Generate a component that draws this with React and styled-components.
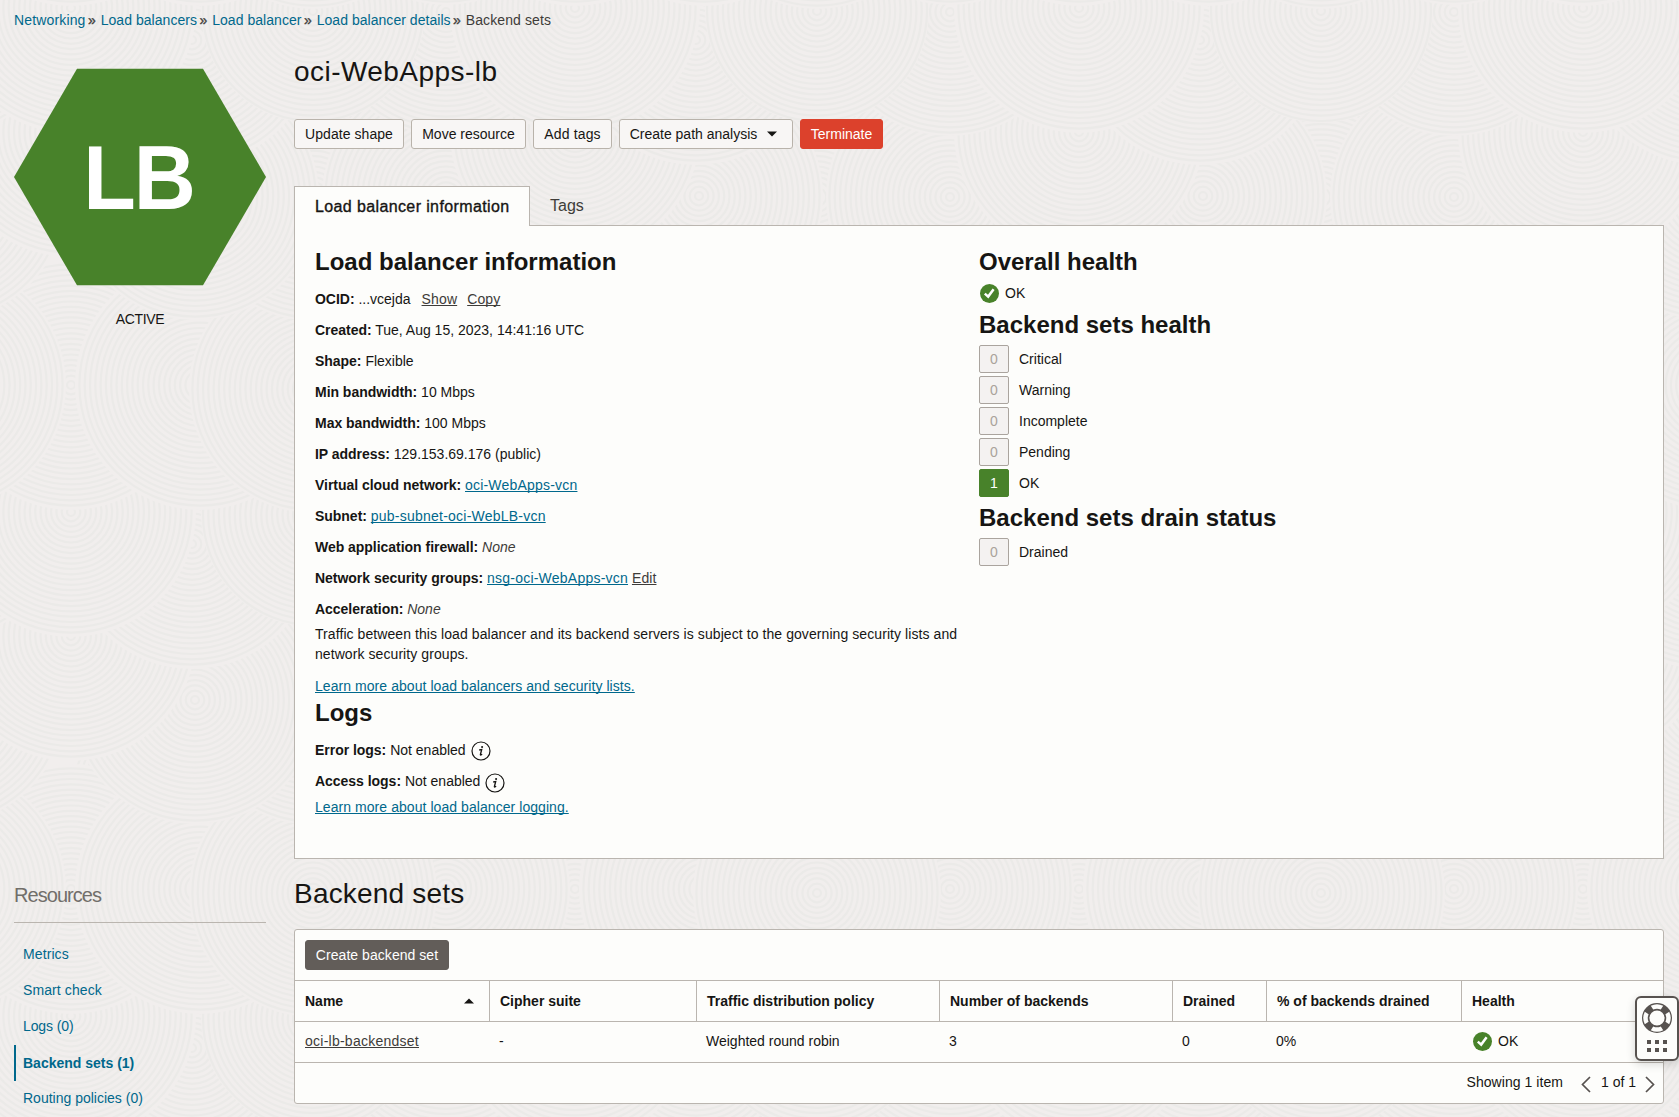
import React from "react";
import styled, { createGlobalStyle, css } from "styled-components";

const C = {
  bg: "#f1eeed",
  ring: "#ebeae8",
  panel: "#fdfdfb",
  line: "#bab5af",
  text: "#161513",
  soft: "#3e3c39",
  link: "#00688c",
  green: "#48822a",
  red: "#dc412c",
  dark: "#625d59",
};

const Global = createGlobalStyle`
  * { box-sizing: border-box; }
  html, body { margin: 0; padding: 0; height: 1117px; overflow: hidden; background: ${C.bg}; }
  body { font: 14px/20px "Liberation Sans", Arial, sans-serif; color: ${C.text}; }
  h1, h2, p { margin: 0; }
`;

const Page = styled.div`
  position: relative;
  width: 1679px;
  height: 1117px;
  overflow: hidden;
  isolation: isolate;
`;

const Texture = styled.svg`
  position: absolute;
  inset: 0;
  z-index: -1;
`;

const Breadcrumbs = styled.nav`
  display: flex;
  padding: 10px 14px 0;
  height: 30px;
  white-space: nowrap;
`;
const Crumb = styled.span`
  color: ${(p) => (p.$current ? C.soft : C.link)};
  letter-spacing: ${(p) => p.$track || 0}px;
`;
const Chevrons = styled.span`
  width: 15.2px;
  padding-left: 2.5px;
  font-size: 14px;
  -webkit-text-stroke: 0.3px ${C.soft};
  color: ${C.soft};
`;

const Layout = styled.div`
  display: grid;
  grid-template-columns: 252px 1370px;
  grid-template-rows: 829px 258px;
  column-gap: 28px;
  padding-left: 14px;
`;

const Identity = styled.aside`
  padding-top: 38px;
  text-align: center;
`;
const Hexagon = styled.div`
  display: flex;
  align-items: center;
  justify-content: center;
  height: 218px;
  padding: 2px 2px 0 0;
  background: ${C.green};
  clip-path: polygon(25% 0.3%, 75% 0.3%, 100% 50%, 75% 99.7%, 25% 99.7%, 0 50%);
`;
const Initials = styled.span`
  color: #fff;
  font-size: 91px;
  font-weight: bold;
  line-height: 100px;
  letter-spacing: -2px;
  transform: scaleX(0.945);
`;
const Status = styled.div`
  margin-top: 23px;
  letter-spacing: -0.35px;
`;

const Title = styled.h1`
  padding-top: 1px;
  font-size: 28px;
  line-height: 36px;
  height: 36px;
  font-weight: normal;
  letter-spacing: ${(p) => p.$track || 0}px;
`;
const Info = styled.main`
  padding-top: 23px;
`;
const Actions = styled.div`
  display: flex;
  gap: 7px;
  margin-top: 30px;
`;
const Button = styled.button`
  display: inline-flex;
  align-items: center;
  justify-content: center;
  gap: 10px;
  width: ${(p) => p.$w}px;
  height: 30px;
  padding: 0 ${(p) => p.$right || 0}px 0 0;
  border: 1px solid #b9b3ab;
  border-radius: 3px;
  background: #f8f6f5;
  color: ${C.text};
  font: inherit;
  letter-spacing: ${(p) => p.$track || 0}px;
  white-space: nowrap;
  ${(p) =>
    p.$tone &&
    css`
      background: ${p.$tone};
      border-color: ${p.$tone};
      color: #fff;
    `}
`;

const Tabs = styled.div`
  display: flex;
  height: 39px;
  margin-top: 37px;
`;
const Tab = styled.div`
  height: 40px;
  padding: 10px 20px 0 20px;
  font-size: 16px;
  line-height: 20px;
  color: ${C.soft};
  ${(p) =>
    p.$active &&
    css`
      position: relative;
      width: 236px;
      padding-top: 10px;
      padding-right: 0;
      border: 1px solid ${C.line};
      border-bottom: 0;
      background: ${C.panel};
      color: ${C.text};
      -webkit-text-stroke: 0.35px ${C.text};
      letter-spacing: 0.38px;
      white-space: nowrap;
    `}
`;
const Panel = styled.section`
  display: grid;
  grid-template-columns: 664px 664px;
  height: 634px;
  padding: 22px 20px;
  border: 1px solid ${C.line};
  background: ${C.panel};
`;
const Heading = styled.h2`
  font-size: 24px;
  line-height: 28px;
  font-weight: bold;
  margin-top: ${(p) => p.$top || 0}px;
`;
const Facts = styled.div`
  display: flex;
  flex-direction: column;
  gap: 11px;
  margin-top: 13px;
`;
const Fact = styled.div`
  height: 20px;
  white-space: pre;
  svg {
    position: relative;
    top: ${(p) => p.$drop || 0}px;
    margin-left: 5px;
    vertical-align: -5px;
  }
`;
const Label = styled.b`
  letter-spacing: -0.03px;
`;
const Link = styled.a`
  color: ${(p) => (p.$muted ? C.soft : C.link)};
  text-decoration: underline;
  text-underline-offset: 1px;
  text-decoration-thickness: 1px;
  text-decoration-skip-ink: none;
  margin-left: ${(p) => p.$left || 0}px;
  letter-spacing: ${(p) => p.$track || 0}px;
`;
const None = styled.i`
  color: ${C.soft};
`;
const Note = styled.p`
  width: 650px;
  margin-top: ${(p) => p.$top}px;
  letter-spacing: 0.075px;
`;

const HealthLine = styled.div`
  display: flex;
  align-items: center;
  gap: 6px;
  padding-left: ${(p) => p.$left || 0}px;
  margin-top: ${(p) => p.$top || 0}px;
  height: 20px;
`;
const Counts = styled.div`
  display: flex;
  flex-direction: column;
  gap: 3px;
  margin-top: 6px;
`;
const CountRow = styled.div`
  display: flex;
  align-items: center;
  gap: 10px;
  height: 28px;
`;
const Count = styled.span`
  width: 30px;
  height: 28px;
  border: 1px solid ${(p) => (p.$on ? C.green : "#aaa49e")};
  border-radius: 2px;
  background: ${(p) => (p.$on ? C.green : "#f4f2f1")};
  color: ${(p) => (p.$on ? "#fff" : "#aaa39b")};
  line-height: 26px;
  text-align: center;
`;

const Resources = styled.aside`
  padding-top: 24px;
`;
const ResourcesTitle = styled.div`
  height: 40px;
  border-bottom: 1px solid ${C.line};
  font-size: 20px;
  line-height: 24px;
  color: #716e6a;
  letter-spacing: -0.95px;
`;
const Nav = styled.nav`
  margin-top: 14px;
`;
const NavItem = styled.a`
  display: block;
  height: 36px;
  padding-left: 9px;
  line-height: 35px;
  color: ${C.link};
  letter-spacing: ${(p) => p.$track || 0}px;
  ${(p) =>
    p.$active &&
    css`
      border-left: 2px solid ${C.link};
      padding-left: 7px;
      line-height: 36px;
      font-weight: bold;
    `}
`;

const Backends = styled.section`
  padding-top: 16px;
`;
const Card = styled.div`
  height: 175px;
  margin-top: 18px;
  border: 1px solid ${C.line};
  border-radius: 3px;
  background: ${C.panel};
`;
const Toolbar = styled.div`
  height: 50px;
  padding: 10px;
`;
const TableRow = styled.div`
  display: grid;
  grid-template-columns: 194px 207px 243px 233px 94px 195px 202px;
  height: 41px;
  border-top: 1px solid ${C.line};
`;
const HeadCell = styled.div`
  display: flex;
  align-items: center;
  justify-content: space-between;
  padding: 0 15px 0 10px;
  font-weight: bold;
  white-space: nowrap;
  & + & {
    border-left: 1px solid ${C.line};
  }
`;
const Cell = styled.div`
  display: flex;
  align-items: center;
  padding: 0 0 2px 10px;
  white-space: nowrap;
`;
const Footer = styled.div`
  display: flex;
  align-items: center;
  justify-content: flex-end;
  height: 41px;
  padding: 0 8px 2px 0;
  border-top: 1px solid ${C.line};
  svg {
    position: relative;
    top: 2px;
  }
`;
const Showing = styled.span`
  margin-right: 18px;
  letter-spacing: 0.05px;
`;
const PagerText = styled.span`
  margin: 0 9px 0 10px;
`;

const HelpWidget = styled.div`
  position: absolute;
  right: 0;
  top: 996px;
  display: flex;
  flex-direction: column;
  align-items: center;
  width: 44px;
  height: 65px;
  padding-top: 4px;
  border: 2px solid #57524f;
  border-radius: 6px;
  background: ${C.panel};
  box-shadow: 0 3px 10px rgba(0, 0, 0, 0.16);
`;
const Dots = styled.div`
  display: grid;
  grid-template-columns: repeat(3, 4px);
  gap: 4px;
  margin-top: 6px;
  i {
    height: 4px;
    background: #57524f;
  }
`;

/* Raked-sand texture: overlapping discs of rings on a 504px tile,
   painted from the bottom of the page up so upper discs cover lower ones. */
const DISCS = [
  [195, 196, 124],
  [313, 197, 124],
  [446, 197, 124],
  [313, 389, 124],
  [446, 385, 124],
  [71, 385, 125],
  [200, 385, 125],
  [71, 132, 125],
  [446, 12, 124],
  [71, 8, 125],
  [313, 11, 112],
  [192, 40, 125],
  [192, 300, 125],
  [380, 100, 125],
];
function Background() {
  const rows = [2, 1, 0, -1];
  const cols = [-1, 0, 1, 2, 3];
  const bands = [[12, 5, 6, 4, 3], [13, 1, 0, 2, 7], [11, 8, 9, 10]];
  const placed = [];
  rows.forEach((row) =>
    bands.forEach((band) =>
      band.forEach((k) =>
        cols.forEach((col) => {
          const [x, y, r] = DISCS[k];
          placed.push({ x: x + col * 504, y: y + row * 504, r });
        })
      )
    )
  );
  const rings = [];
  for (let r = 4; r < 125; r += 5.3) rings.push(r);
  return (
    <Texture width="1679" height="1117">
      <defs>
        {[112, 124, 125].map((size) => (
          <g key={size} id={`disc${size}`}>
            <circle r={size} fill={C.bg} />
            {rings
              .filter((r) => r <= size)
              .map((r) => (
                <circle key={r} r={r} fill="none" stroke={C.ring} strokeWidth="2.2" />
              ))}
          </g>
        ))}
      </defs>
      {placed.map((d, i) => (
        <use key={i} href={`#disc${d.r}`} x={d.x} y={d.y} />
      ))}
    </Texture>
  );
}

const Check = () => (
  <svg width="19" height="19" viewBox="0 0 19 19">
    <circle cx="9.5" cy="9.5" r="9.5" fill={C.green} />
    <path d="M4.8 9.6l3.4 3 5.4-7.4" fill="none" stroke="#fff" strokeWidth="2.5" />
  </svg>
);
const InfoIcon = () => (
  <svg width="20" height="20" viewBox="0 0 20 20">
    <circle cx="10" cy="10" r="9" fill="none" stroke={C.text} strokeWidth="1.2" />
    <circle cx="11.1" cy="6" r="1.05" fill={C.text} />
    <path
      d="M8.2 9l2.5-.5-1.3 5c-.2.9.6.8 1.7-.4"
      fill="none"
      stroke={C.text}
      strokeWidth="1.3"
    />
  </svg>
);
const Triangle = ({ up }) => (
  <svg width="10" height="6" viewBox="0 0 10 6">
    <path d={up ? "M0 5.5L5 0.5l5 5z" : "M0 0.5h10L5 5.5z"} fill={C.text} />
  </svg>
);
const Arrow = ({ left }) => (
  <svg width="10" height="17" viewBox="0 0 10 17">
    <path
      d={left ? "M9 1L1.5 8.5 9 16" : "M1 1l7.5 7.5L1 16"}
      fill="none"
      stroke="#57524f"
      strokeWidth="1.7"
    />
  </svg>
);
const Lifebuoy = () => (
  <svg width="32" height="32" viewBox="-16 -16 32 32">
    <circle r="11.3" fill="none" stroke="#57524f" strokeWidth="7.4" />
    {[0, 90, 180, 270].map((a) => (
      <path
        key={a}
        transform={`rotate(${a})`}
        d="M-6.2 -12.2A13.7 13.7 0 0 1 6.2 -12.2L3.8 -8.4A9.2 9.2 0 0 0 -3.8 -8.4z"
        fill={C.panel}
      />
    ))}
  </svg>
);

const COUNTS = [
  ["0", "Critical"],
  ["0", "Warning"],
  ["0", "Incomplete"],
  ["0", "Pending"],
  ["1", "OK"],
];
const HEADERS = [
  "Name",
  "Cipher suite",
  "Traffic distribution policy",
  "Number of backends",
  "Drained",
  "% of backends drained",
  "Health",
];

export default function App() {
  return (
    <Page>
      <Global />
      <Background />
      <Breadcrumbs>
        <Crumb $track={0.15}>Networking</Crumb>
        <Chevrons>»</Chevrons>
        <Crumb $track={0.04}>Load balancers</Crumb>
        <Chevrons>»</Chevrons>
        <Crumb $track={0.04}>Load balancer</Crumb>
        <Chevrons>»</Chevrons>
        <Crumb $track={0.04}>Load balancer details</Crumb>
        <Chevrons>»</Chevrons>
        <Crumb $current $track={0.1}>Backend sets</Crumb>
      </Breadcrumbs>
      <Layout>
        <Identity>
          <Hexagon>
            <Initials>LB</Initials>
          </Hexagon>
          <Status>ACTIVE</Status>
        </Identity>
        <Info>
          <Title $track={0.45}>oci-WebApps-lb</Title>
          <Actions>
            <Button $w={110} $track={0.05}>Update shape</Button>
            <Button $w={115}>Move resource</Button>
            <Button $w={79} $track={0.15}>Add tags</Button>
            <Button $w={174} $right={5}>
              Create path analysis <Triangle />
            </Button>
            <Button $w={83} $tone={C.red}>
              Terminate
            </Button>
          </Actions>
          <Tabs>
            <Tab $active>Load balancer information</Tab>
            <Tab>Tags</Tab>
          </Tabs>
          <Panel>
            <div>
              <Heading>Load balancer information</Heading>
              <Facts>
                <Fact>
                  <Label>OCID:</Label> ...vcejda
                  <Link $muted $left={11} $track={0.15}>Show</Link>
                  <Link $muted $left={10} $track={0.15}>Copy</Link>
                </Fact>
                <Fact><Label>Created:</Label> Tue, Aug 15, 2023, 14:41:16 UTC</Fact>
                <Fact><Label>Shape:</Label> Flexible</Fact>
                <Fact><Label>Min bandwidth:</Label> 10 Mbps</Fact>
                <Fact><Label>Max bandwidth:</Label> 100 Mbps</Fact>
                <Fact><Label>IP address:</Label> 129.153.69.176 (public)</Fact>
                <Fact><Label>Virtual cloud network:</Label> <Link $track={0.2}>oci-WebApps-vcn</Link></Fact>
                <Fact><Label>Subnet:</Label> <Link $track={0.23}>pub-subnet-oci-WebLB-vcn</Link></Fact>
                <Fact><Label>Web application firewall:</Label> <None>None</None></Fact>
                <Fact>
                  <Label>Network security groups:</Label> <Link $track={0.23}>nsg-oci-WebApps-vcn</Link>{" "}
                  <Link $muted $track={0.1}>Edit</Link>
                </Fact>
                <Fact><Label>Acceleration:</Label> <None>None</None></Fact>
              </Facts>
              <Note $top={5}>
                Traffic between this load balancer and its backend servers is subject to the
                governing security lists and network security groups.
              </Note>
              <Note $top={12}>
                <Link $track={0.06}>Learn more about load balancers and security lists.</Link>
              </Note>
              <Heading $top={3}>Logs</Heading>
              <Facts>
                <Fact $drop={1}><Label>Error logs:</Label> Not enabled<InfoIcon /></Fact>
                <Fact $drop={2}><Label>Access logs:</Label> Not enabled<InfoIcon /></Fact>
              </Facts>
              <Note $top={6}>
                <Link $track={0.06}>Learn more about load balancer logging.</Link>
              </Note>
            </div>
            <div>
              <Heading>Overall health</Heading>
              <HealthLine $top={7} $left={1}>
                <Check /> OK
              </HealthLine>
              <Heading $top={8}>Backend sets health</Heading>
              <Counts>
                {COUNTS.map(([n, label]) => (
                  <CountRow key={label}>
                    <Count $on={n !== "0"}>{n}</Count>
                    {label}
                  </CountRow>
                ))}
              </Counts>
              <Heading $top={7}>Backend sets drain status</Heading>
              <Counts>
                <CountRow>
                  <Count>0</Count>Drained
                </CountRow>
              </Counts>
            </div>
          </Panel>
        </Info>
        <Resources>
          <ResourcesTitle>Resources</ResourcesTitle>
          <Nav>
            <NavItem $track={0.1}>Metrics</NavItem>
            <NavItem $track={0.1}>Smart check</NavItem>
            <NavItem $track={-0.1}>Logs (0)</NavItem>
            <NavItem $active>Backend sets (1)</NavItem>
            <NavItem>Routing policies (0)</NavItem>
          </Nav>
        </Resources>
        <Backends>
          <Title $track={0.2}>Backend sets</Title>
          <Card>
            <Toolbar>
              <Button $w={144} $tone={C.dark} $track={0.05}>
                Create backend set
              </Button>
            </Toolbar>
            <TableRow>
              {HEADERS.map((h, i) => (
                <HeadCell key={h}>
                  {h}
                  {i === 0 && <Triangle up />}
                </HeadCell>
              ))}
            </TableRow>
            <TableRow>
              <Cell><Link $muted $track={0.25}>oci-lb-backendset</Link></Cell>
              <Cell>-</Cell>
              <Cell>Weighted round robin</Cell>
              <Cell>3</Cell>
              <Cell>0</Cell>
              <Cell>0%</Cell>
              <Cell>
                <HealthLine $left={2}>
                  <Check /> OK
                </HealthLine>
              </Cell>
            </TableRow>
            <Footer>
              <Showing>Showing 1 item</Showing>
              <Arrow left />
              <PagerText>1 of 1</PagerText>
              <Arrow />
            </Footer>
          </Card>
        </Backends>
      </Layout>
      <HelpWidget>
        <Lifebuoy />
        <Dots>
          {[0, 1, 2, 3, 4, 5].map((d) => (
            <i key={d} />
          ))}
        </Dots>
      </HelpWidget>
    </Page>
  );
}
